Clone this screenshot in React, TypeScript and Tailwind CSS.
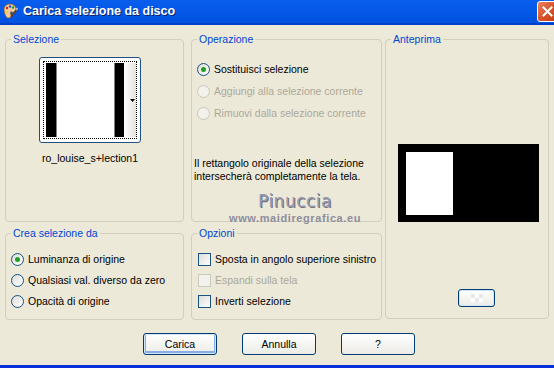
import clsx from "clsx";

const font = "font-['Liberation_Sans',Arial,sans-serif]";

function Radio({ checked, disabled }: { checked?: boolean; disabled?: boolean }) {
  return (
    <span
      className={clsx(
        "flex h-[13px] w-[13px] shrink-0 items-center justify-center rounded-full border",
        disabled
          ? "border-[#CAC8BB] bg-[#F2F1EB]"
          : "border-[#1C5180] bg-linear-to-br from-[#DCDCD7] to-white"
      )}
    >
      {checked && <span className="h-[5px] w-[5px] rounded-full bg-[#21A121]" />}
    </span>
  );
}

function Check({ disabled }: { disabled?: boolean }) {
  return (
    <span
      className={clsx(
        "h-[13px] w-[13px] shrink-0 border",
        disabled
          ? "border-[#CAC8BB] bg-[#F2F1EB]"
          : "border-[#1C5180] bg-linear-to-br from-[#DCDCD7] to-white"
      )}
    />
  );
}

function Option({
  label,
  kind,
  checked,
  disabled,
  h = "h-[22px]",
}: {
  label: string;
  kind: "radio" | "check";
  checked?: boolean;
  disabled?: boolean;
  h?: string;
}) {
  return (
    <div className={clsx("flex items-center gap-[4px] whitespace-nowrap", h)}>
      {kind === "radio" ? (
        <Radio checked={checked} disabled={disabled} />
      ) : (
        <Check disabled={disabled} />
      )}
      <span className={disabled ? "text-[#ACA899]" : "text-black"}>{label}</span>
    </div>
  );
}

function Group({
  title,
  className,
  children,
}: {
  title: string;
  className?: string;
  children?: React.ReactNode;
}) {
  return (
    <fieldset
      className={clsx(
        "relative rounded-[4px] border border-[#D0D0BF] p-0",
        className
      )}
    >
      <legend className="ml-[5px] px-[2px] text-[10.5px] leading-[13px] text-[#0046D5]">
        {title}
      </legend>
      {children}
    </fieldset>
  );
}

function XpButton({
  label,
  isDefault,
  className,
}: {
  label: string;
  isDefault?: boolean;
  className?: string;
}) {
  return (
    <button
      className={clsx(
        "flex items-center justify-center rounded-[3px] border border-[#003C74] bg-linear-to-b from-white to-[#ECEBE6] text-[10.5px] text-black",
        isDefault && "shadow-[inset_0_0_0_1px_#CEE7FF,inset_0_-1px_0_2px_#89ADE4]",
        className
      )}
    >
      {label}
    </button>
  );
}

export default function App() {
  return (
    <div
      className={clsx(
        "flex h-[368px] w-[554px] flex-col overflow-hidden bg-[#ECE9D8] text-[10.5px] leading-[13px]",
        font
      )}
    >
      {/* title bar */}
      <div className="flex h-[25px] shrink-0 items-start justify-between border-b-[2px] border-[#0040C8] bg-linear-to-b from-[#0A5EEE] to-[#0052E0]">
        <div className="flex items-center gap-[5px] pl-[2px] pt-[3px]">
          <svg width="16" height="16" viewBox="0 0 16 16">
            <path d="M2 6c0-3 3-5 6-5s6 2 6 5-2 4-4 3-2 1-1 3-1 3-3 3C4 15 2 10 2 6z" fill="#F2C9A0" stroke="#8A5A2A" strokeWidth="0.8" />
            <circle cx="5" cy="5" r="1.2" fill="#E02020" />
            <circle cx="8" cy="3.5" r="1.2" fill="#2050E0" />
            <circle cx="11" cy="4.5" r="1.2" fill="#20A020" />
            <circle cx="5" cy="9" r="1.2" fill="#F0D020" />
            <path d="M9 14L15 6" stroke="#6A3A10" strokeWidth="1.6" />
            <path d="M14 7l1.5-2" stroke="#C0C0C0" strokeWidth="1.6" />
          </svg>
          <span className="text-[12.5px] font-bold leading-[16px] text-white [text-shadow:1px_1px_0_#0A246A]">
            Carica selezione da disco
          </span>
        </div>
        <div className="-mr-[4px] mt-[1px] flex h-[21px] w-[21px] items-center justify-center rounded-[3px] border border-white bg-linear-to-br from-[#E8845E] via-[#D9532C] to-[#C23A12]">
          <svg width="11" height="11" viewBox="0 0 11 11">
            <path d="M1.5 1.5l8 8M9.5 1.5l-8 8" stroke="white" strokeWidth="2" strokeLinecap="square" />
          </svg>
        </div>
      </div>

      {/* body */}
      <div className="flex pl-[5px] pt-[8px]">
        <div className="flex w-[179px] flex-col gap-[5px]">
          <Group title="Selezione" className="h-[189px]">
            <div className="ml-[33px] mt-[11px] flex w-[102px] flex-col items-center">
              <div className="h-[86px] w-[102px] rounded-[3px] border border-[#1C5180] bg-white p-[3px]">
                <div className="flex h-full border border-dotted border-black py-[1px] pl-[2px]">
                  <div className="w-[11px] border-r border-[#808080] bg-black" />
                  <div className="w-[58px] bg-white" />
                  <div className="w-[10px] border-l border-[#808080] bg-black" />
                  <div className="flex w-[12px] items-center justify-end bg-linear-to-r from-white to-[#E4E3DC] pr-[1px]">
                    <svg width="5" height="3" viewBox="0 0 5 3">
                      <path d="M0 0h5L2.5 3z" fill="black" />
                    </svg>
                  </div>
                </div>
              </div>
              <div className="mt-[9px] whitespace-nowrap">ro_louise_s+lection1</div>
            </div>
          </Group>
          <Group title="Crea selezione da" className="h-[93px]">
            <div className="ml-[5px] mt-[9px]">
              <Option kind="radio" checked label="Luminanza di origine" h="h-[21px]" />
              <Option kind="radio" label="Qualsiasi val. diverso da zero" h="h-[21px]" />
              <Option kind="radio" label="Opacità di origine" h="h-[21px]" />
            </div>
          </Group>
        </div>

        <div className="ml-[7px] flex w-[191px] flex-col gap-[5px]">
          <Group title="Operazione" className="h-[189px]">
            <div className="ml-[5px] mt-[12px]">
              <Option kind="radio" checked label="Sostituisci selezione" />
              <Option kind="radio" disabled label="Aggiungi alla selezione corrente" />
              <Option kind="radio" disabled label="Rimuovi dalla selezione corrente" />
            </div>
            <p className="ml-[2px] mt-[33px] whitespace-nowrap">
              Il rettangolo originale della selezione
              <br />
              intersecherà completamente la tela.
            </p>
            <div className="pointer-events-none absolute left-[37px] top-[146px] flex flex-col items-center">
              <span className="font-['DejaVu_Sans',sans-serif] text-[17px] leading-[18px] tracking-[0.5px] text-[#9A9AAE] [text-shadow:1px_1px_0_#6E6E80]">
                Pinuccia
              </span>
              <span className="mt-[3px] text-[11px] font-bold leading-[11px] tracking-[0.6px] text-[#8E8E9C]">
                www.maidiregrafica.eu
              </span>
            </div>
          </Group>
          <Group title="Opzioni" className="h-[93px]">
            <div className="ml-[6px] mt-[9px]">
              <Option kind="check" label="Sposta in angolo superiore sinistro" h="h-[21px]" />
              <Option kind="check" disabled label="Espandi sulla tela" h="h-[21px]" />
              <Option kind="check" label="Inverti selezione" h="h-[21px]" />
            </div>
          </Group>
        </div>

        <div className="ml-[3px] w-[164px]">
          <Group title="Anteprima" className="h-[286px]">
            <div className="ml-[12px] mt-[98px] flex h-[78px] w-[141px] bg-black pl-[8px] pt-[8px]">
              <div className="h-[63px] w-[47px] bg-white" />
            </div>
            <div className="ml-[72px] mt-[67px] flex h-[18px] w-[37px] items-center justify-center rounded-[3px] border border-[#003C74] bg-linear-to-b from-white to-[#ECEBE6] shadow-[inset_0_0_0_1px_#CEE7FF]">
              <div className="grid grid-cols-3">
                <span className="h-[4px] w-[4px] bg-[#E8E8E8]" />
                <span className="h-[4px] w-[4px] bg-white" />
                <span className="h-[4px] w-[4px] bg-[#E8E8E8]" />
                <span className="h-[4px] w-[4px] bg-white" />
                <span className="h-[4px] w-[4px] bg-[#E8E8E8]" />
                <span className="h-[4px] w-[4px] bg-white" />
              </div>
            </div>
          </Group>
        </div>
      </div>

      {/* buttons */}
      <div className="ml-[143px] mt-[13px] flex gap-[25px]">
        <XpButton label="Carica" isDefault className="h-[22px] w-[74px]" />
        <XpButton label="Annulla" className="h-[22px] w-[74px]" />
        <XpButton label="?" className="h-[22px] w-[74px]" />
      </div>

      <div className="mt-auto h-[3px] shrink-0 bg-[#0831D9]" />
    </div>
  );
}
